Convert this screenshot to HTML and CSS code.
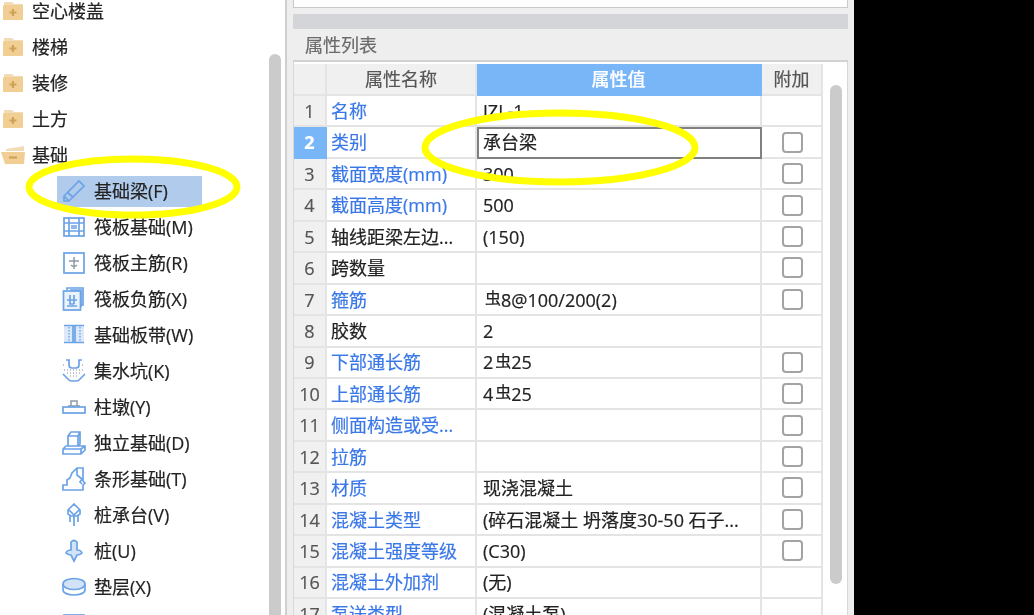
FILE: index.html
```html
<!DOCTYPE html>
<html lang="zh-CN">
<head>
<meta charset="utf-8">
<title>属性列表</title>
<link rel="stylesheet" href="styles.css">
</head>
<body>
<div class="app">
  <aside class="side">
    <ul class="tree">
      <li class="item group"><svg class="folder" viewBox="0 0 24 20"><path d="M3 1h8l2 2h9v1H3z" fill="#f3dcb4"/><rect x="2" y="4" width="20" height="15" rx="1" fill="#f1cf94"/><path d="M8.500 11.500h7M12 8v7" stroke="#cfa256" stroke-width="2.200"/></svg>空心楼盖</li>
      <li class="item group"><svg class="folder" viewBox="0 0 24 20"><path d="M3 1h8l2 2h9v1H3z" fill="#f3dcb4"/><rect x="2" y="4" width="20" height="15" rx="1" fill="#f1cf94"/><path d="M8.500 11.500h7M12 8v7" stroke="#cfa256" stroke-width="2.200"/></svg>楼梯</li>
      <li class="item group"><svg class="folder" viewBox="0 0 24 20"><path d="M3 1h8l2 2h9v1H3z" fill="#f3dcb4"/><rect x="2" y="4" width="20" height="15" rx="1" fill="#f1cf94"/><path d="M8.500 11.500h7M12 8v7" stroke="#cfa256" stroke-width="2.200"/></svg>装修</li>
      <li class="item group"><svg class="folder" viewBox="0 0 24 20"><path d="M3 1h8l2 2h9v1H3z" fill="#f3dcb4"/><rect x="2" y="4" width="20" height="15" rx="1" fill="#f1cf94"/><path d="M8.500 11.500h7M12 8v7" stroke="#cfa256" stroke-width="2.200"/></svg>土方</li>
      <li class="item group"><svg class="folder" viewBox="0 0 24 20"><path d="M5 4l13-2 5-1v5H5z" fill="#f3dcb4"/><path d="M0 7h24l-1 12H4z" fill="#f1cf94"/><path d="M8 12.500h8" stroke="#cfa256" stroke-width="2.200"/></svg>基础</li>
      <li class="item child selected"><svg class="icon" viewBox="0 0 24 24"><path d="M2 22v-5L17 2l5 5L7 22zM2 17l5 5M6 14l5 4" class="ln"/></svg><span>基础梁(F)</span></li>
      <li class="item child"><svg class="icon" viewBox="0 0 24 24"><rect x="2" y="3" width="20" height="18" class="ln"/><path d="M2 8h20M2 16h20M7 3v18M17 3v18M9 11h6M9 13h6" class="ln"/></svg><span>筏板基础(M)</span></li>
      <li class="item child"><svg class="icon" viewBox="0 0 24 24"><rect x="2" y="2" width="20" height="20" class="ln"/><path d="M7 10h10M12 6v12M9 14q3 3 6 0" class="ln gr"/></svg><span>筏板主筋(R)</span></li>
      <li class="item child"><svg class="icon" viewBox="0 0 24 24"><path d="M5 3V1h16v17h-2" class="ln"/><path d="M8 3h11v17" class="ln"/><rect x="1.500" y="4" width="17" height="19" class="ln fl2"/><path d="M5 13h10M8 8v9h4M12 8v9M5 19h10" class="ln"/></svg><span>筏板负筋(X)</span></li>
      <li class="item child"><svg class="icon" viewBox="0 0 24 24"><rect x="2" y="2" width="20" height="18" fill="#dce9f9"/><path d="M2 2.500h20M2 19.500h20M11 3v16M13 3v16" class="ln"/><path d="M7 4v14M18 4v14" class="ln dot2"/></svg><span>基础板带(W)</span></li>
      <li class="item child"><svg class="icon" viewBox="0 0 24 24"><path d="M4 1h3v5q0 3 3 3h4q3 0 3-3V1h3M1 15l6 6q1 1 3 1h4q2 0 3-1l6-6" class="ln"/><path d="M1 6h3M20 6h3M2 11h20M5 14h14M8 17h8" class="ln dot"/></svg><span>集水坑(K)</span></li>
      <li class="item child"><svg class="icon" viewBox="0 0 24 24"><path d="M9 11V6h6v5M6 11h12" class="ln gr"/><rect x="1" y="12" width="22" height="6" class="ln"/></svg><span>柱墩(Y)</span></li>
      <li class="item child"><svg class="icon" viewBox="0 0 24 24"><path d="M6 15V5h10v10M6 5l3-4h9v12l-2 2M16 5l2-4" class="ln"/><path d="M1 23v-5l3-3h19v4l-4 4zM1 18h18v5M19 18l4-3" class="ln"/></svg><span>独立基础(D)</span></li>
      <li class="item child"><svg class="icon" viewBox="0 0 24 24"><path d="M1 23v-5h4v-5l3-2 2-5 5-5h6v13l2 2-2 2v5zM15 1v7l5 4-2 3 2 2" class="ln"/></svg><span>条形基础(T)</span></li>
      <li class="item child"><svg class="icon" viewBox="0 0 24 24"><path d="M12 1l6 6v4l-3 2H9l-3-2V7zM7 7l5 5 5-5M12 12v11M8 13v6M16 13v6" class="ln"/></svg><span>桩承台(V)</span></li>
      <li class="item child"><svg class="icon" viewBox="0 0 24 24"><path d="M9 3q3-3 6 0v8q4 0 5 3-2 2-5 2l-3 6-3-6q-3 0-5-2 1-3 5-3z" class="ln fl"/></svg><span>桩(U)</span></li>
      <li class="item child"><svg class="icon" viewBox="0 0 24 24"><path d="M1 9v6c0 3 5 5 11 5s11-2 11-5V9" class="ln"/><ellipse cx="12" cy="9" rx="11" ry="5.500" class="ln fl"/></svg><span>垫层(X)</span></li>
      <li class="item child"><svg class="icon" viewBox="0 0 24 24"><rect x="2" y="4" width="20" height="18" class="ln"/></svg><span></span></li>
    </ul>
    <div class="track"><div class="thumb tree-thumb"></div></div>
  </aside>

  <main class="panel">
    <div class="top-box"></div>
    <div class="grip"></div>
    <section class="props">
      <h2 class="title">属性列表</h2>
      <div class="body">
        <div class="table">
          <div class="row head">
            <div class="no"></div>
            <div class="name">属性名称</div>
            <div class="val active">属性值</div>
            <div class="ext">附加</div>
          </div>
          <div class="row"><div class="no">1</div><div class="name link">名称</div><div class="val">JZL-1</div><div class="ext"></div></div>
          <div class="row"><div class="no on">2</div><div class="name link">类别</div><div class="val edit">承台梁</div><div class="ext"><i class="check"></i></div></div>
          <div class="row"><div class="no">3</div><div class="name link">截面宽度(mm)</div><div class="val">300</div><div class="ext"><i class="check"></i></div></div>
          <div class="row"><div class="no">4</div><div class="name link">截面高度(mm)</div><div class="val">500</div><div class="ext"><i class="check"></i></div></div>
          <div class="row"><div class="no">5</div><div class="name">轴线距梁左边...</div><div class="val">(150)</div><div class="ext"><i class="check"></i></div></div>
          <div class="row"><div class="no">6</div><div class="name">跨数量</div><div class="val"></div><div class="ext"><i class="check"></i></div></div>
          <div class="row"><div class="no">7</div><div class="name link">箍筋</div><div class="val"><span class="bar lead">虫</span>8@100/200(2)</div><div class="ext"><i class="check"></i></div></div>
          <div class="row"><div class="no">8</div><div class="name">胶数</div><div class="val">2</div><div class="ext"></div></div>
          <div class="row"><div class="no">9</div><div class="name link">下部通长筋</div><div class="val">2<span class="bar">虫</span>25</div><div class="ext"><i class="check"></i></div></div>
          <div class="row"><div class="no">10</div><div class="name link">上部通长筋</div><div class="val">4<span class="bar">虫</span>25</div><div class="ext"><i class="check"></i></div></div>
          <div class="row"><div class="no">11</div><div class="name link">侧面构造或受...</div><div class="val"></div><div class="ext"><i class="check"></i></div></div>
          <div class="row"><div class="no">12</div><div class="name link">拉筋</div><div class="val"></div><div class="ext"><i class="check"></i></div></div>
          <div class="row"><div class="no">13</div><div class="name link">材质</div><div class="val">现浇混凝土</div><div class="ext"><i class="check"></i></div></div>
          <div class="row"><div class="no">14</div><div class="name link">混凝土类型</div><div class="val">(碎石混凝土 坍落度30-50 石子...</div><div class="ext"><i class="check"></i></div></div>
          <div class="row"><div class="no">15</div><div class="name link">混凝土强度等级</div><div class="val">(C30)</div><div class="ext"><i class="check"></i></div></div>
          <div class="row"><div class="no">16</div><div class="name link">混凝土外加剂</div><div class="val">(无)</div><div class="ext"></div></div>
          <div class="row"><div class="no">17</div><div class="name link">泵送类型</div><div class="val">(混凝土泵)</div><div class="ext"></div></div>
        </div>
        <div class="track table-track"><div class="thumb table-thumb"></div></div>
      </div>
    </section>
  </main>
</div>
<svg class="marks" viewBox="0 0 1034 615">
  <ellipse cx="133" cy="187" rx="104" ry="28" class="mark"/>
  <ellipse cx="560" cy="147.500" rx="135" ry="34.500" class="mark"/>
</svg>
</body>
</html>
```
FILE: styles.css
```css
* { box-sizing: border-box; }
html, body { margin: 0; height: 100%; }
body {
  width: 1034px;
  height: 615px;
  overflow: hidden;
  background: #000;
  color: #222;
  font: 18px/1.2 "Open Sans", "Noto Sans CJK SC", sans-serif;
  -webkit-text-stroke: 0.2px currentColor;
  position: relative;
}
.app {
  width: 854px;
  height: 615px;
  display: flex;
  overflow: hidden;
  filter: blur(0.5px);
}
.side {
  width: 287px;
  flex: none;
  background: #fff;
  display: flex;
  border-right: 2px solid #cfcfcf;
  overflow: hidden;
}
.tree {
  list-style: none;
  margin: -7px 0 0;
  padding: 0;
  width: 269px;
  flex: none;
}
.item {
  height: 36px;
  padding-top: 2px;
  display: flex;
  align-items: center;
  white-space: nowrap;
}
.group { padding-left: 1px; gap: 7px; }
.folder { width: 24px; height: 20px; flex: none; margin-top: -2px; }
.child { padding-left: 62px; gap: 8px; }
.child.selected { position: relative; }
.child.selected::before {
  content: "";
  position: absolute;
  left: 57px;
  top: 2.500px;
  width: 145px;
  height: 31px;
  background: #b0cbec;
}
.child > * { position: relative; }
.icon { width: 24px; height: 24px; flex: none; margin-top: -2px; }
.ln { fill: none; stroke: #6ba3e6; stroke-width: 1.700; }
.ln.gr { stroke: #8e9aa8; stroke-width: 1.500; }
.ln.dot { stroke: #aab4bf; stroke-dasharray: 1 2; }
.ln.dot2 { stroke-dasharray: 1.500 1.500; stroke-width: 1.300; }
.ln.fl { fill: #d3e3f7; }
.ln.fl2 { fill: #eaf2fc; }
.track { flex: none; width: 12px; }
.thumb { width: 12px; border-radius: 6px; background: #cbcbcb; }
.tree-thumb { margin-top: 54px; height: 600px; }

.panel {
  flex: 1;
  min-width: 0;
  background: #eeeeee;
  padding: 0 6px;
  display: flex;
  flex-direction: column;
}
.top-box {
  height: 8px;
  flex: none;
  background: #fff;
  border: 1px solid #c9c9c9;
  border-top: 0;
}
.grip { height: 15px; margin-top: 6px; flex: none; background: #d3d5d8; }
.props { flex: 1; min-height: 0; display: flex; flex-direction: column; }
.title {
  margin: 0;
  height: 33px;
  flex: none;
  padding: 2px 0 0 12px;
  display: flex;
  align-items: center;
  font-size: 18px;
  font-weight: 400;
  color: #6a6a6a;
  border-bottom: 2px solid #d2d2d2;
}
.body {
  display: flex;
  background: #fff;
  flex: 1;
  min-height: 0;
  padding-top: 2px;
  border-left: 1px solid #d8d8d8;
  border-right: 1px solid #d8d8d8;
}
.table { width: 529px; flex: none; }
.row {
  display: grid;
  grid-template-columns: 33px 150px 285px 61px;
  height: 31.440px;
  font-size: 18px;
}
.row > div {
  display: flex;
  align-items: center;
  min-width: 0;
  padding-top: 2px;
  white-space: nowrap;
  overflow: hidden;
  border-bottom: 2px solid #e4e4e4;
  border-right: 2px solid #e4e4e4;
}
.row > .no { justify-content: center; background: #f0f0f0; color: #555; }
.row > .name { padding-left: 4px; color: #222; }
.row > .link { color: #3a78e8; }
.row > .val { padding-left: 6px; }
.row > .ext { justify-content: center; padding: 0 0 0 2px; }
.head { height: 32px; }
.head > div { justify-content: center; background: #f0f0f0; color: #555; }
.row.head > .name { padding-left: 0; color: #555; justify-content: center; }
.row.head > .ext { padding: 2px 0 0; }
.row.head > .active { padding-left: 0; justify-content: center; background: #78b6f8; color: #fff; border-color: #78b6f8; font-weight: 500; }
.row > .on { background: #78b6f8; color: #fff; border-color: #78b6f8; font-weight: 700; }
.row > .edit { border: 2px solid #808080; padding: 0 0 0 4px; }
.bar { font-size: 16px; margin: 0 0 0 2px; position: relative; top: -2px; }
.bar.lead { margin-left: 2px; }
.check {
  display: block;
  width: 21px;
  height: 21px;
  border: 2px solid #a3a3a3;
  border-radius: 4px;
  background: #fff;
}
.table-track { width: 12px; margin-left: 7px; }
.table-thumb { margin-top: 21px; height: 499px; }

.marks { position: absolute; left: 0; top: 0; width: 1034px; height: 615px; pointer-events: none; filter: blur(0.4px); }
.mark { fill: none; stroke: #ffff00; stroke-width: 7; }
```
